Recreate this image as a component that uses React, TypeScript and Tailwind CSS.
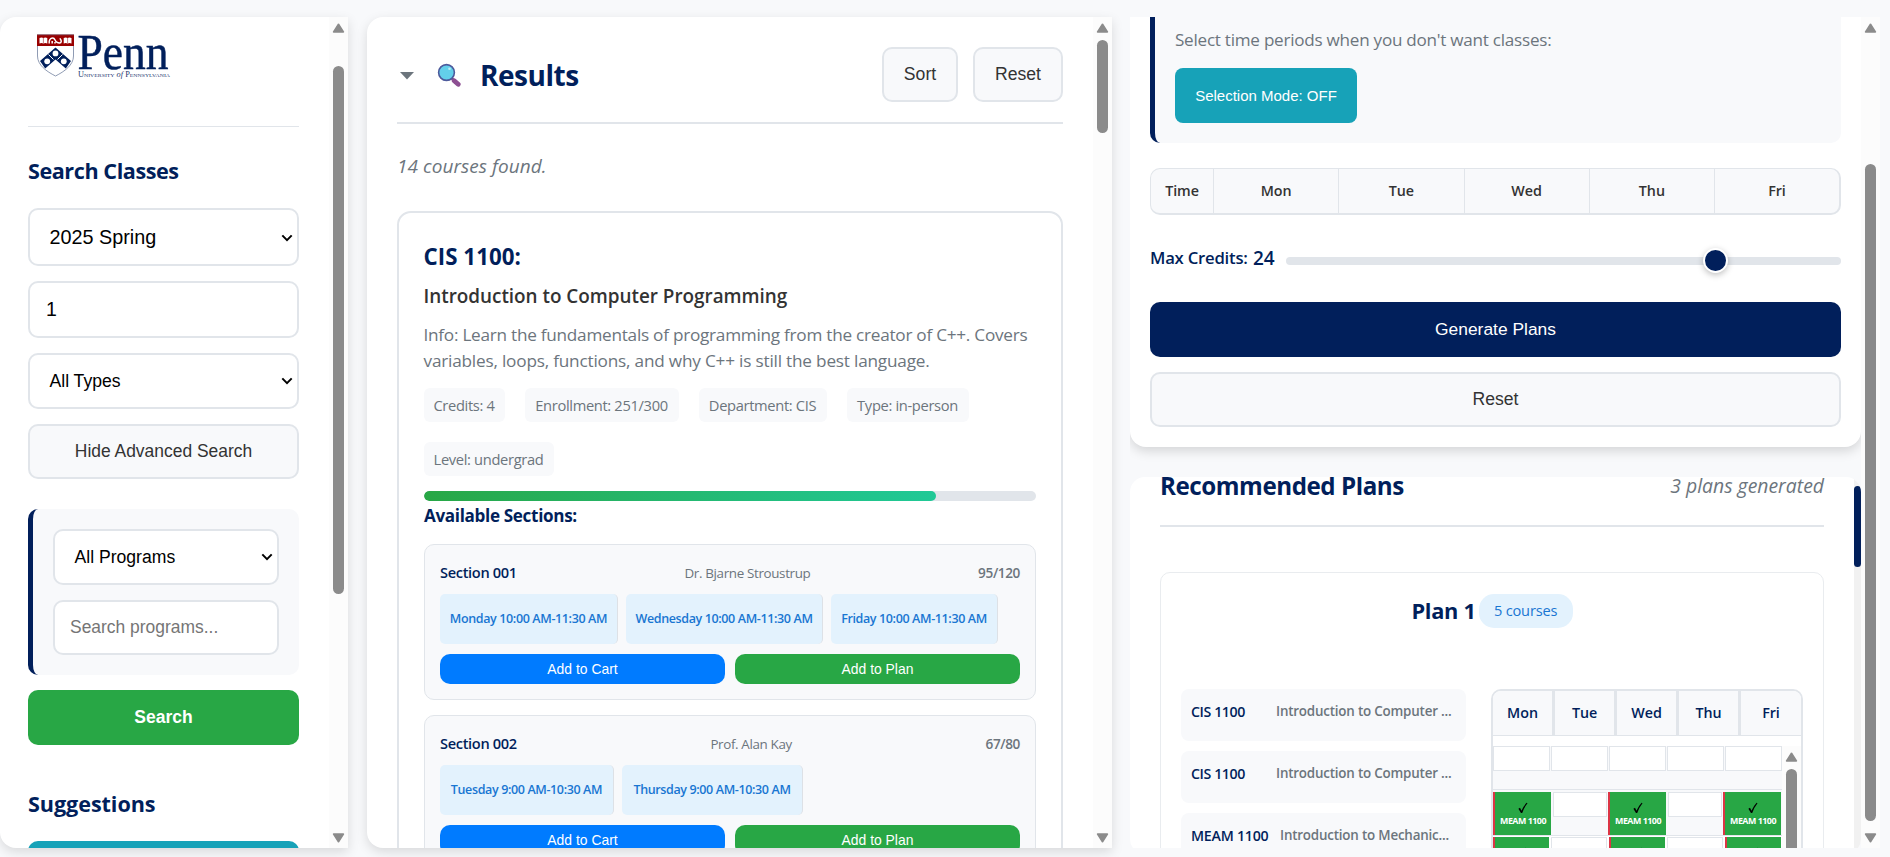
import React from "react";
import clsx from "clsx";

const ui = "font-['Liberation_Sans',Arial,sans-serif]";

function Chevron() {
  return (
    <svg width="12" height="8" viewBox="0 0 12 8" fill="none">
      <path d="M1.3 1.4 6 6.1 10.7 1.4" stroke="#000" strokeWidth="2" />
    </svg>
  );
}

function Scrollbar({ thumb, down = true, className }: { thumb: string; down?: boolean; className?: string }) {
  return (
    <div className={clsx("flex w-[19px] shrink-0 flex-col items-center bg-[#fcfcfc]", className)}>
      <svg className="mt-[6px] shrink-0" width="13" height="10" viewBox="0 0 13 10">
        <path d="M6.5 1.3 11.4 8.9H1.6Z" fill="#8b8b8b" stroke="#8b8b8b" strokeWidth="1.6" strokeLinejoin="round" />
      </svg>
      <div className={clsx("w-[11px] shrink-0 rounded-full bg-[#8b8b8b]", thumb)} />
      {down && (
        <svg className="mt-auto mb-[5px] shrink-0" width="13" height="10" viewBox="0 0 13 10">
          <path d="M6.5 8.7 11.4 1.1H1.6Z" fill="#8b8b8b" stroke="#8b8b8b" strokeWidth="1.6" strokeLinejoin="round" />
        </svg>
      )}
    </div>
  );
}

function PennLogo() {
  return (
    <svg className="ml-[9px] block overflow-visible" width="134" height="46" viewBox="0 0 134 46">
      <path d="M.5 1.5h36v20.500c0 9-9 15.500-18 20c-9-4.500-18-11-18-20Z" fill="#fff" stroke="#8f9bb3" />
      <path d="M0 1h37v11H0Z" fill="#990000" />
      <path d="M0 .8h37" stroke="#7a4050" />
      <path d="M2.500 4q2-1 3.900 0q1.900-1 3.900 0v5.500q-2-.8-3.900 0q-1.900-.8-3.900 0ZM26.700 4q2-1 3.900 0q1.900-1 3.900 0v5.500q-2-.8-3.900 0q-1.900-.8-3.900 0Z" fill="#fff" />
      <path d="M6.400 4v5.500M30.600 4v5.500" stroke="#b04a55" strokeWidth=".7" />
      <path d="M12.200 9.500c-.5-3 1-5.500 3.500-5.500s2 3 4 4.200s4.300 1.300 4.500-.5s-1-2-1-3.500M15.200 9.500V7M18 9.500V8" stroke="#fff" strokeWidth="1.500" fill="none" />
      <path d="M18.500 13.500 34 27 28.800 34.500 18.500 25.500 8.200 34.500 3 27Z" fill="#011f5b" />
      <g fill="#fff">
        <circle cx="18.500" cy="19.400" r="2.900" />
        <circle cx="10.200" cy="27.300" r="2.900" />
        <circle cx="26.800" cy="27.300" r="2.900" />
      </g>
      <path d="m11.500 20.500 5 5M25.500 20.500l-5 5" stroke="#fff" strokeWidth="1" />
      <text x="40.500" y="35" textLength="91" lengthAdjust="spacingAndGlyphs" fontSize="51" fill="#011f5b" stroke="#011f5b" strokeWidth=".5" className="font-['Liberation_Serif',serif]">Penn</text>
      <text x="41" y="42.500" textLength="92" lengthAdjust="spacingAndGlyphs" fontSize="7.200" fill="#1d366f" className="font-['Liberation_Serif',serif] [font-variant:small-caps]">
        University <tspan fontStyle="italic" className="[font-variant:normal]">of</tspan> Pennsylvania
      </text>
    </svg>
  );
}

function Magnifier() {
  return (
    <svg width="24" height="24" viewBox="0 0 24 24">
      <path d="m14.500 15 2.500 2.500" stroke="#6b4a86" strokeWidth="2.500" />
      <path d="m17.200 17.700 4 3.600" stroke="#8d4f92" strokeWidth="4.800" strokeLinecap="round" />
      <circle cx="9.500" cy="9.500" r="7.900" fill="#63cfea" stroke="#4d5a9c" strokeWidth="1.600" />
      <circle cx="12.500" cy="5.800" r="1.300" fill="#b9ecf7" />
    </svg>
  );
}

const field = "flex items-center rounded-[10px] border-2 border-[#e1e5ea] bg-white";

function Select({ children, className }: { children: string; className: string }) {
  return (
    <div className={clsx(field, ui, "justify-between pl-[19.5px] pr-[4px] text-black", className)}>
      <span>{children}</span>
      <Chevron />
    </div>
  );
}

function Sidebar() {
  return (
    <aside className="flex w-[348px] shrink-0 overflow-hidden rounded-l-2xl bg-white shadow-[0_4px_12px_rgba(0,0,0,0.13)]">
      <div className="flex min-w-0 flex-1 flex-col pl-7 pr-[30px]">
        <div className="h-[110px] shrink-0 border-b border-[#e1e5ea] pt-[17px]">
          <PennLogo />
        </div>
        <h2 className="mt-[29px] text-[21.6px] leading-[30px] font-bold tracking-[-0.44px] text-[#011f5b]">Search Classes</h2>
        <Select className="mt-[22px] h-[58px] shrink-0 pt-px text-[19.8px]">2025 Spring</Select>
        <div className={clsx(field, ui, "mt-[15px] h-[57px] shrink-0 pl-4 text-[19.5px]")}>
          <span>1</span>
        </div>
        <Select className="mt-[15px] h-14 shrink-0 text-[17.6px]">All Types</Select>
        <button className={clsx(ui, "mt-[15px] h-[55px] shrink-0 rounded-[10px] border-2 border-[#e1e5ea] bg-[#f8f9fb] pb-px text-[17.45px] text-[#333]")}>
          Hide Advanced Search
        </button>
        <div className="mt-[30px] flex h-[166px] shrink-0 flex-col gap-[15px] rounded-[10px] border-l-[5px] border-[#011f5b] bg-[#f8f9fb] p-5">
          <Select className="h-14 shrink-0 text-[17.6px]">All Programs</Select>
          <div className={clsx(field, ui, "h-[55px] shrink-0 pl-[15px] text-[17.45px] text-[#757575]")}>Search programs...</div>
        </div>
        <button className={clsx(ui, "mt-[15px] h-[55px] shrink-0 rounded-[10px] bg-[#28a745] text-[17.5px] font-bold text-white")}>Search</button>
        <h2 className="mt-[44px] text-[21.6px] leading-[30px] font-bold tracking-[-0.07px] text-[#011f5b]">Suggestions</h2>
        <div className="mt-[22px] h-[55px] shrink-0 rounded-[10px] bg-[#17a2b8]" />
      </div>
      <Scrollbar thumb="mt-[33px] h-[528px]" />
    </aside>
  );
}

const light = clsx(ui, "flex items-center justify-center rounded-[10px] border-2 border-[#e1e5ea] bg-[#f8f9fb] text-[17.6px] text-[#333]");

type Slot = { label: string; width: string };
type Section = { name: string; teacher: string; seats: string; slots: Slot[] };

const sections: Section[] = [
  {
    name: "Section 001",
    teacher: "Dr. Bjarne Stroustrup",
    seats: "95/120",
    slots: [
      { label: "Monday 10:00 AM-11:30 AM", width: "w-[178px]" },
      { label: "Wednesday 10:00 AM-11:30 AM", width: "w-[197px]" },
      { label: "Friday 10:00 AM-11:30 AM", width: "w-[167px]" },
    ],
  },
  {
    name: "Section 002",
    teacher: "Prof. Alan Kay",
    seats: "67/80",
    slots: [
      { label: "Tuesday 9:00 AM-10:30 AM", width: "w-[174px]" },
      { label: "Thursday 9:00 AM-10:30 AM", width: "w-[181px]" },
    ],
  },
];

function SectionCard({ s }: { s: Section }) {
  return (
    <div className="mb-[15px] h-[156px] shrink-0 rounded-[10px] border border-[#e1e5ea] bg-[#f8f9fb] px-[15px] pt-[15px]">
      <div className="flex h-[26px] items-center justify-between whitespace-nowrap">
        <span className="text-[14.6px] font-semibold tracking-[-0.34px] text-[#011f5b]">{s.name}</span>
        <span className="text-[13.4px] tracking-[-0.35px] text-[#6c757d]">{s.teacher}</span>
        <span className="text-[13.6px] font-semibold tracking-[-0.38px] text-[#6c757d]">{s.seats}</span>
      </div>
      <div className="mt-[8px] flex gap-2">
        {s.slots.map((t) => (
          <div key={t.label} className={clsx("flex h-[50px] items-center justify-center rounded-[5px] border-r border-[#dde1e6] bg-[#e3f2fd] text-[12.5px] font-semibold tracking-[-0.37px] whitespace-nowrap text-[#1976d2]", t.width)}>
            {t.label}
          </div>
        ))}
      </div>
      <div className={clsx(ui, "mt-[10px] grid grid-cols-2 gap-[10px] text-[13.9px] text-white")}>
        <button className="h-[30px] rounded-[10px] bg-[#007bff]">Add to Cart</button>
        <button className="h-[30px] rounded-[10px] bg-[#28a745]">Add to Plan</button>
      </div>
    </div>
  );
}

function Results() {
  const chips: [string, string][] = [
    ["Credits: 4", "w-[81px]"],
    ["Enrollment: 251/300", "w-[154px]"],
    ["Department: CIS", "w-[128px]"],
    ["Type: in-person", "w-[122px]"],
    ["Level: undergrad", "w-[130px]"],
  ];
  return (
    <main className="flex w-[745px] shrink-0 overflow-hidden rounded-l-2xl bg-white shadow-[0_4px_12px_rgba(0,0,0,0.13)]">
      <div className="flex min-w-0 flex-1 flex-col px-[30px]">
        <header className="flex h-[107px] shrink-0 items-center border-b-2 border-[#e1e5ea] pt-[10px]">
          <svg className="mt-[3px] ml-[3px]" width="14" height="8" viewBox="0 0 14 8">
            <path d="M0 0h14L7 7.500Z" fill="#6c757d" />
          </svg>
          <div className="ml-[23px]">
            <Magnifier />
          </div>
          <h1 className="ml-[19px] flex-1 text-[28px] leading-[36px] font-bold tracking-[-0.47px] text-[#011f5b]">Results</h1>
          <button className={clsx(light, "h-[55px] w-[76px]")}>Sort</button>
          <button className={clsx(light, "ml-[15px] h-[55px] w-[90px]")}>Reset</button>
        </header>
        <p className="mt-[28px] text-[19px] leading-[28px] tracking-[0.05px] text-[#6c757d] italic">14 courses found.</p>
        <article className="mt-[31px] flex h-[900px] shrink-0 flex-col rounded-[14px] border-2 border-[#e1e5ea] px-[25px] pt-[29px]">
          <h3 className="-ml-[0.5px] text-[22.3px] leading-[30px] font-bold tracking-[0.05px] text-[#011f5b]">CIS 1100:</h3>
          <h4 className="-ml-[0.5px] mt-[10px] text-[18.9px] leading-[28px] font-semibold tracking-[-0.02px] text-[#333]">Introduction to Computer Programming</h4>
          <p className="-ml-[0.5px] mt-[12px] text-[17.2px] leading-[26px] whitespace-nowrap text-[#6c757d]">
            <span className="tracking-[-0.26px]">Info: Learn the fundamentals of programming from the creator of C++. Covers</span>
            <br />
            <span className="tracking-[-0.2px]">variables, loops, functions, and why C++ is still the best language.</span>
          </p>
          <div className="mt-[14px] flex flex-wrap gap-5">
            {chips.map(([c, w]) => (
              <span key={c} className={clsx("flex h-[34px] items-center justify-center rounded-md bg-[#f8f9fb] pr-px text-[14.7px] tracking-[-0.34px] whitespace-nowrap text-[#6c757d]", w)}>
                {c}
              </span>
            ))}
          </div>
          <div className="mt-[15px] h-[10px] shrink-0 overflow-hidden rounded-full bg-[#e1e5ea]">
            <div className="h-full w-[83.67%] rounded-full bg-linear-to-r from-[#28a745] to-[#20c997]" />
          </div>
          <h5 className="mt-[3px] mb-[16px] text-[17.1px] leading-[24px] font-bold tracking-[-0.34px] text-[#011f5b]">Available Sections:</h5>
          {sections.map((s) => (
            <SectionCard key={s.name} s={s} />
          ))}
        </article>
      </div>
      <Scrollbar thumb="mt-[7px] h-[93px]" />
    </main>
  );
}

function Planner() {
  return (
    <section className="h-[430px] shrink-0 rounded-b-2xl bg-white px-5 shadow-[0_4px_12px_rgba(0,0,0,0.15)]">
      <div className="h-[126px] rounded-b-[10px] border-l-[5px] border-[#011f5b] bg-[#f8f9fb] pt-[10px] pl-5">
        <p className="text-[17.1px] leading-[26px] tracking-[-0.25px] text-[#6c757d]">Select time periods when you don't want classes:</p>
        <button className={clsx(ui, "mt-[15px] h-[55px] w-[182px] rounded-lg bg-[#17a2b8] pt-px text-[15px] text-white")}>Selection Mode: OFF</button>
      </div>
      <div className="mt-[25px] grid h-[47px] grid-cols-[63px_repeat(4,125.25px)_1fr] divide-x divide-[#e1e5ea] overflow-hidden rounded-[10px] border border-r-2 border-b-2 border-[#e1e5ea] bg-[#f8f9fb] text-[14.3px] font-semibold tracking-[-0.05px] text-[#333]">
        {["Time", "Mon", "Tue", "Wed", "Thu", "Fri"].map((d) => (
          <div key={d} className="flex items-center justify-center">{d}</div>
        ))}
      </div>
      <div className="mt-[27px] flex h-[32px] items-center text-[#011f5b]">
        <span className="w-[103px] text-[16.7px] font-semibold tracking-[-0.22px] whitespace-nowrap">Max Credits:</span>
        <span className="w-[33px] text-[19px] font-semibold">24</span>
        <div className="mt-[6px] flex h-2 flex-1 items-center rounded bg-[#e1e5ea]">
          <div className="-mt-[2px] ml-[417px] size-[25px] shrink-0 rounded-full border-2 border-white bg-[#011f5b] shadow-[0_2px_6px_rgba(0,0,0,0.25)]" />
        </div>
      </div>
      <button className={clsx(ui, "mt-[28px] h-[55px] w-full rounded-[10px] bg-[#011f5b] text-[17.4px] text-white")}>Generate Plans</button>
      <button className={clsx(light, "mt-[15px] h-[55px] w-full")}>Reset</button>
    </section>
  );
}

const planCourses: [string, string, string][] = [
  ["CIS 1100", "Introduction to Computer ...", "w-[85px] tracking-[-0.41px]"],
  ["CIS 1100", "Introduction to Computer ...", "w-[85px] tracking-[-0.41px]"],
  ["MEAM 1100", "Introduction to Mechanic...", "w-[89px] tracking-[-0.24px]"],
];

function Booked({ className }: { className: string }) {
  return (
    <div className={clsx("flex flex-col items-center border-l-2 border-[#dc3545] bg-[#28a745]", className)}>
      <svg className="mt-[10px] shrink-0" width="10" height="12" viewBox="0 0 10 12">
        <path d="M.4 6.800 2 5.800 3.500 8.800Q5.500 4 8.600.8L9.500 1.200Q6 5.500 4.200 11H3Z" fill="#000" />
      </svg>
      <span className="-mt-[1px] text-[8.9px] leading-[15px] font-bold tracking-[-0.5px] whitespace-nowrap text-white">MEAM 1100</span>
    </div>
  );
}

function Timetable() {
  const free = "border border-[#e1e5ea] bg-white";
  return (
    <div className="flex h-[400px] w-[312px] flex-col overflow-hidden rounded-[10px] border-2 border-[#e1e5ea] bg-white">
      <div className="grid h-[45px] shrink-0 grid-cols-[62px_62px_62px_62px_1fr] border-b border-[#e1e5ea] bg-[#f8f9fb] text-[14.3px] font-semibold tracking-[-0.05px] text-[#011f5b]">
        {["Mon", "Tue", "Wed", "Thu", "Fri"].map((d) => (
          <div key={d} className="flex items-center justify-center border-r-3 border-[#e1e5ea] last:border-r-0">{d}</div>
        ))}
      </div>
      <div className="mt-[10px] flex flex-1">
        <div className="w-[289px] shrink-0">
          <div className="grid h-[44px] grid-cols-5 gap-[1px] border-b border-[#e1e5ea] bg-[#f8f9fb]">
            {[0, 1, 2, 3, 4].map((n) => (
              <div key={n} className={clsx(free, "h-[25px]")} />
            ))}
          </div>
          <div className="flex h-[46px] border-b border-[#e1e5ea] bg-[#f8f9fb] pt-[2px]">
            <Booked className="h-[43px] w-[58px]" />
            <div className={clsx(free, "mr-[1px] ml-[2px] h-[25px] w-[54px]")} />
            <Booked className="h-[43px] w-[58px]" />
            <div className={clsx(free, "mr-[1px] ml-[2px] h-[25px] w-[54px]")} />
            <Booked className="h-[43px] w-[58px]" />
          </div>
          <div className="flex gap-[2px] bg-white pt-[1px]">
            <Booked className="h-[43px] w-14" />
            <div className={clsx(free, "h-[25px] w-14")} />
            <Booked className="h-[43px] w-14" />
            <div className={clsx(free, "h-[25px] w-14")} />
            <Booked className="h-[43px] w-14" />
          </div>
        </div>
        <Scrollbar thumb="mt-[7px] h-[200px]" down={false} />
      </div>
    </div>
  );
}

function Plans() {
  return (
    <section className="mt-[30px] flex h-[377px] shrink-0 overflow-hidden rounded-[15px] bg-white">
      <div className="min-w-0 flex-1 pr-[30px] pl-[30px]">
        <header className="flex h-[50px] items-start justify-between border-b-2 border-[#e1e5ea] whitespace-nowrap">
          <h2 className="-mt-[8px] text-[24.2px] leading-[34px] font-bold tracking-[-0.46px] text-[#011f5b]">Recommended Plans</h2>
          <span className="-mt-[5px] text-[19.4px] leading-[28px] text-[#6c757d] italic">3 plans generated</span>
        </header>
        <div className="mt-[45px] h-[600px] rounded-[10px] border border-[#e9ecef] px-5 pt-[21px]">
          <div className="flex h-[34px] items-center justify-center">
            <h3 className="pt-px text-[21.8px] font-bold tracking-[-0.3px] text-[#011f5b]">Plan 1</h3>
            <span className="ml-[3px] flex h-[34px] w-[94px] items-center justify-center rounded-[15px] bg-[#e3f2fd] text-[14.6px] font-medium tracking-[-0.18px] text-[#1976d2]">5 courses</span>
          </div>
          <div className="mt-[61px] flex gap-[25px]">
            <div className="flex w-[285px] shrink-0 flex-col gap-[10px]">
              {planCourses.map(([code, name, w], i) => (
                <div key={i} className="flex h-[52px] items-start rounded-lg bg-[#f8f9fb] pt-[12px] pl-[10px] whitespace-nowrap">
                  <span className={clsx("text-[14.2px] leading-[22px] font-semibold text-[#011f5b]", w)}>{code}</span>
                  <span className="text-[13.4px] leading-[21px] font-semibold tracking-[-0.2px] text-[#6c757d]">{name}</span>
                </div>
              ))}
            </div>
            <Timetable />
          </div>
        </div>
      </div>
      <div className="w-[7px] shrink-0 bg-[#f1f1f1] pt-[9px]">
        <div className="h-[81px] rounded-full bg-[#011f5b]" />
      </div>
    </section>
  );
}

export default function App() {
  return (
    <div className="flex h-[857px] w-[1890px] overflow-hidden bg-[#f8f9fb] pt-[17px] pb-[9px] font-['Open_Sans',sans-serif]">
      <Sidebar />
      <div className="w-[19px] shrink-0" />
      <Results />
      <div className="w-[18px] shrink-0" />
      <div className="flex w-[750px] shrink-0 overflow-hidden">
        <div className="flex min-w-0 flex-1 flex-col overflow-hidden">
          <Planner />
          <Plans />
        </div>
        <Scrollbar thumb="mt-[131px] h-[657px]" />
      </div>
    </div>
  );
}
